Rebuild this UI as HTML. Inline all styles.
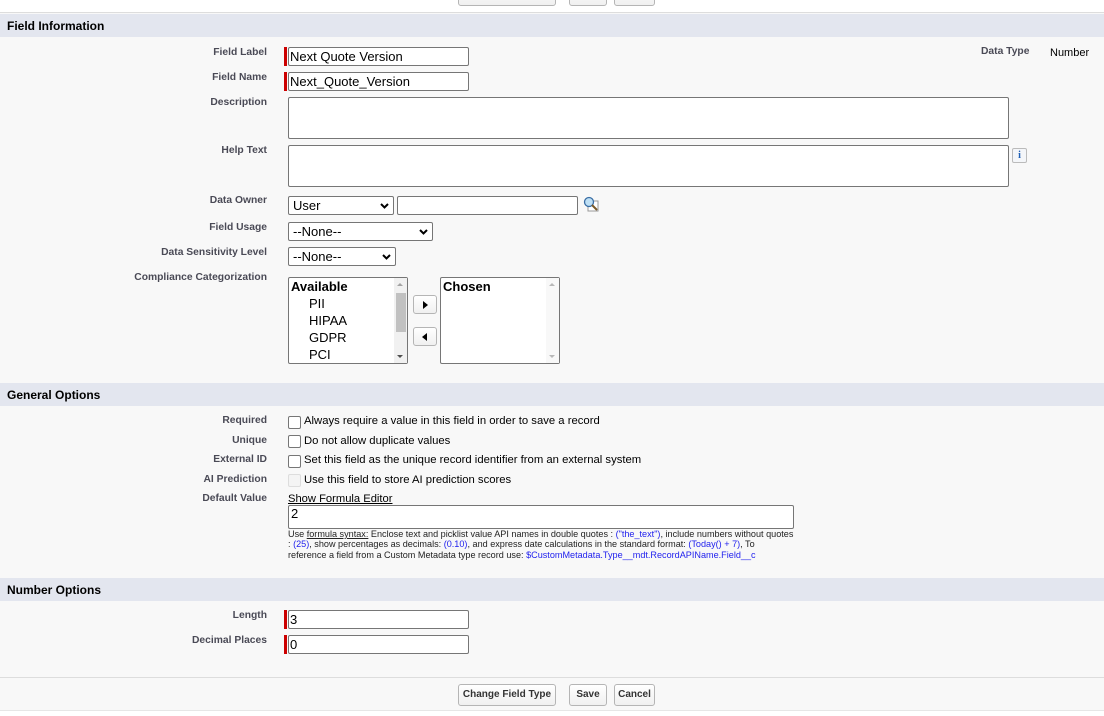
<!DOCTYPE html>
<html><head><style>
*{box-sizing:border-box;margin:0;padding:0}
body{width:1104px;height:716px;background:#f8f8f8;font-family:"Liberation Sans",Arial,sans-serif;position:relative;overflow:hidden;color:#000}
.a{position:absolute}
.hd{position:absolute;left:0;width:1104px;height:23px;background:#e3e6ef;font-weight:bold;font-size:12px;padding:5px 7px;color:#000}
.lb{position:absolute;right:837px;font-weight:bold;font-size:10.3px;color:#4a4a56;text-align:right;white-space:nowrap;margin-top:1px}
.in{position:absolute;left:288px;height:19px;background:#fff;border:1px solid #767676;border-radius:2px;font-size:13px;padding:1px 1px;line-height:15px}
.req{position:absolute;left:284px;width:3px;height:19px;background:#c00}
.ta{position:absolute;left:288px;width:721px;height:42px;background:#fff;border:1px solid #767676;border-radius:2px}
.sel{position:absolute;left:288px;height:19px;background:#fff;border:1px solid #767676;border-radius:2px;font-size:13px;padding:1px 4px;line-height:15px}
.sel svg{position:absolute;right:4px;top:6px}
.btn{position:absolute;height:22px;border:1px solid #b5b5b5;border-radius:3px;background:linear-gradient(#fff,#f0f0f0);font-weight:bold;font-size:10px;color:#333;text-align:center;line-height:20px}
.cb{position:absolute;left:288px;width:13px;height:13px;border:1px solid #767676;border-radius:2px;background:#fff}
.ct{position:absolute;left:304px;font-size:11.3px;color:#000}
.blue{color:#2222ee}
</style></head><body>
<div class="a" style="left:0;top:0;width:1104px;height:13px;background:#fff;border-bottom:1px solid #ddd"></div>
<div class="btn" style="left:458px;top:-16px;width:98px"></div>
<div class="btn" style="left:569px;top:-16px;width:38px"></div>
<div class="btn" style="left:614px;top:-16px;width:41px"></div>

<div class="hd" style="top:14px">Field Information</div>
<div class="lb" style="top:46px">Field Label</div>
<div class="req" style="top:47px"></div><div class="in" style="top:47px;width:181px">Next Quote Version</div>
<div class="a" style="left:981px;top:46px;font-size:10.3px;font-weight:bold;color:#4a4a56">Data Type</div>
<div class="a" style="left:1050px;top:47px;font-size:11px">Number</div>
<div class="lb" style="top:71px">Field Name</div>
<div class="req" style="top:72px"></div><div class="in" style="top:72px;width:181px">Next_Quote_Version</div>
<div class="lb" style="top:96px">Description</div>
<div class="ta" style="top:97px"></div>
<div class="lb" style="top:144px">Help Text</div>
<div class="ta" style="top:145px"></div>
<div class="a" style="left:1012px;top:148px;width:15px;height:15px;border:1px solid #bbb;border-radius:2px;background:#f4f6f9;color:#1f5fb5;font-size:10px;font-weight:bold;text-align:center;line-height:13px;font-family:'Liberation Serif',serif">i</div>
<div class="lb" style="top:194px">Data Owner</div>
<div class="sel" style="top:196px;width:106px">User<svg width="9" height="6"><path d="M1 1L4.5 4.5L8 1" stroke="#000" stroke-width="2" fill="none"/></svg></div>
<div class="in" style="top:196px;left:397px;width:181px"></div>
<svg class="a" style="left:583px;top:196px" width="16" height="16"><rect x="5" y="5" width="10" height="10" fill="#fff" stroke="#999"/><circle cx="6" cy="6" r="4.5" fill="#bfe0f5" stroke="#3a6ea5" stroke-width="1.3"/><path d="M9 9L14 14" stroke="#7a5a2a" stroke-width="2"/></svg>
<div class="lb" style="top:221px">Field Usage</div>
<div class="sel" style="top:222px;width:145px">--None--<svg width="9" height="6"><path d="M1 1L4.5 4.5L8 1" stroke="#000" stroke-width="2" fill="none"/></svg></div>
<div class="lb" style="top:246px">Data Sensitivity Level</div>
<div class="sel" style="top:247px;width:108px">--None--<svg width="9" height="6"><path d="M1 1L4.5 4.5L8 1" stroke="#000" stroke-width="2" fill="none"/></svg></div>
<div class="lb" style="top:271px">Compliance Categorization</div>
<div class="a" style="left:288px;top:277px;width:120px;height:87px;background:#fff;border:1px solid #767676;border-radius:2px;font-size:13px;line-height:17px;padding:0 2px">
<b>Available</b><div style="padding-left:18px">PII<br>HIPAA<br>GDPR<br>PCI</div>
<div class="a" style="right:0;top:0;width:13px;height:85px;background:#f1f1f1"><div class="a" style="left:2px;top:15px;width:10px;height:39px;background:#c1c1c1"></div><div class="a" style="left:3px;top:5px;border:3px solid transparent;border-bottom-color:#a3a3a3;border-top:0"></div><div class="a" style="left:3px;bottom:5px;border:3px solid transparent;border-top-color:#505050;border-bottom:0"></div></div></div>
<div class="btn" style="left:413px;top:295px;width:24px;height:19px"><svg width="8" height="10" style="margin-top:4px"><path d="M2 1L7 5L2 9Z" fill="#000"/></svg></div>
<div class="btn" style="left:413px;top:327px;width:24px;height:19px"><svg width="8" height="10" style="margin-top:4px"><path d="M6 1L1 5L6 9Z" fill="#000"/></svg></div>
<div class="a" style="left:440px;top:277px;width:120px;height:87px;background:#fff;border:1px solid #767676;border-radius:2px;font-size:13px;line-height:17px;padding:0 2px"><b>Chosen</b>
<div class="a" style="right:0;top:0;width:13px;height:85px;background:#f8f8f8"><div class="a" style="left:3px;top:5px;border:3px solid transparent;border-bottom-color:#b8b8b8;border-top:0"></div><div class="a" style="left:3px;bottom:5px;border:3px solid transparent;border-top-color:#b8b8b8;border-bottom:0"></div></div></div>

<div class="hd" style="top:383px">General Options</div>
<div class="lb" style="top:414px">Required</div><div class="cb" style="top:416px"></div><div class="ct" style="top:415px">Always require a value in this field in order to save a record</div>
<div class="lb" style="top:434px">Unique</div><div class="cb" style="top:435px"></div><div class="ct" style="top:435px">Do not allow duplicate values</div>
<div class="lb" style="top:453px">External ID</div><div class="cb" style="top:455px"></div><div class="ct" style="top:454px">Set this field as the unique record identifier from an external system</div>
<div class="lb" style="top:473px">AI Prediction</div><div class="cb" style="top:474px;border-color:#ddd;background:#f4f4f4"></div><div class="ct" style="top:474px">Use this field to store AI prediction scores</div>
<div class="lb" style="top:492px">Default Value</div>
<div class="a" style="left:288px;top:493px;font-size:11.2px;text-decoration:underline">Show Formula Editor</div>
<div class="a" style="left:288px;top:505px;width:506px;height:24px;background:#fff;border:1px solid #767676;border-radius:2px;font-size:13px;padding:0 2px">2</div>
<div class="a" style="left:288px;top:529px;width:520px;font-size:9.1px;line-height:10.3px;color:#222;white-space:nowrap">Use <u>formula syntax:</u> Enclose text and picklist value API names in double quotes : <span class="blue">("the_text")</span>, include numbers without quotes<br>: <span class="blue">(25)</span>, show percentages as decimals: <span class="blue">(0.10)</span>, and express date calculations in the standard format: <span class="blue">(Today() + 7)</span>, To<br>reference a field from a Custom Metadata type record use: <span class="blue">$CustomMetadata.Type__mdt.RecordAPIName.Field__c</span></div>

<div class="hd" style="top:578px">Number Options</div>
<div class="lb" style="top:609px">Length</div>
<div class="req" style="top:610px"></div><div class="in" style="top:610px;width:181px">3</div>
<div class="lb" style="top:634px">Decimal Places</div>
<div class="req" style="top:635px"></div><div class="in" style="top:635px;width:181px">0</div>

<div class="a" style="left:0;top:677px;width:1104px;height:1px;background:#ddd"></div>
<div class="btn" style="left:458px;top:684px;width:98px">Change Field Type</div>
<div class="btn" style="left:569px;top:684px;width:38px">Save</div>
<div class="btn" style="left:614px;top:684px;width:41px">Cancel</div>
<div class="a" style="left:0;top:710px;width:1104px;height:6px;background:#fff;border-top:1px solid #e6e6e6"></div>
</body></html>
